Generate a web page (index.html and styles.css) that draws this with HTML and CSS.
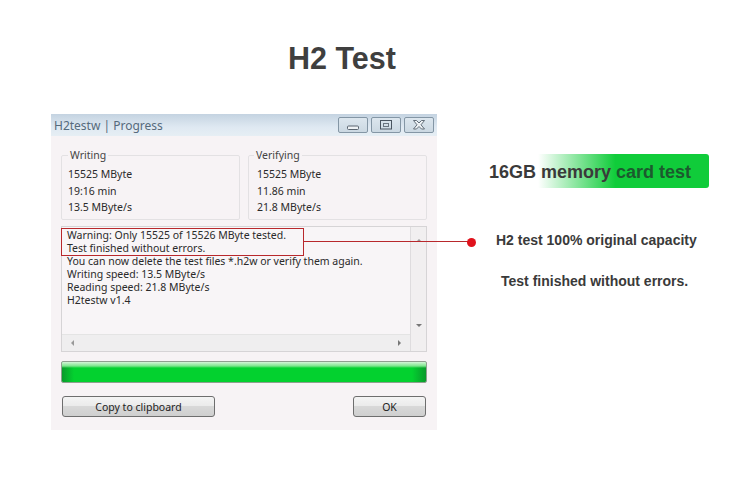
FILE: index.html
```html
<!DOCTYPE html>
<html lang="en">
<head>
    <meta charset="UTF-8">
    <meta name="viewport" content="width=device-width, initial-scale=1.0">
    <title>H2 Test</title>
    <link rel="stylesheet" href="styles.css">
</head>
<body>
    <h1 class="page-title">H2 Test</h1>
    <div class="stage">
        <div class="window">
            <div class="titlebar">
                <span class="titlebar-text">H2testw | Progress</span>
                <div class="win-buttons">
                    <span class="win-btn">
                        <svg width="14" height="10" viewBox="0 0 14 10"><rect x="1.500" y="6" width="11" height="3.500" rx="1" fill="#eef2f5" stroke="#5a6570"/></svg>
                    </span>
                    <span class="win-btn">
                        <svg width="14" height="10" viewBox="0 0 14 10"><rect x="1.500" y="0.500" width="11" height="8.500" fill="none" stroke="#4a5560"/><rect x="4.500" y="3.500" width="5" height="3" fill="none" stroke="#6a7580"/></svg>
                    </span>
                    <span class="win-btn">
                        <svg width="14" height="10" viewBox="0 0 14 10"><path d="M1.500 0.500h3L7 3l2.500-2.500h3L9 4.800l3.500 4.200h-3L7 6.500 4.500 9h-3L5 4.800z" fill="#eef2f5" stroke="#56616c" stroke-width="0.900"/></svg>
                    </span>
                </div>
            </div>
            <div class="window-body">
                <div class="groups">
                    <fieldset class="group group-write">
                        <legend>Writing</legend>
                        <p>15525 MByte</p>
                        <p>19:16 min</p>
                        <p>13.5 MByte/s</p>
                    </fieldset>
                    <fieldset class="group group-verify">
                        <legend>Verifying</legend>
                        <p>15525 MByte</p>
                        <p>11.86 min</p>
                        <p>21.8 MByte/s</p>
                    </fieldset>
                </div>
                <div class="log">
                    <div class="log-main">
                        <div class="log-text">
                            <p>Warning: Only 15525 of 15526 MByte tested.</p>
                            <p>Test finished without errors.</p>
                            <p>You can now delete the test files *.h2w or verify them again.</p>
                            <p>Writing speed: 13.5 MByte/s</p>
                            <p>Reading speed: 21.8 MByte/s</p>
                            <p>H2testw v1.4</p>
                        </div>
                        <div class="hscroll">
                            <span class="arrow-left"></span>
                            <span class="arrow-right"></span>
                        </div>
                    </div>
                    <div class="vscroll">
                        <span class="arrow-up"></span>
                        <span class="arrow-down"></span>
                    </div>
                    <div class="callout-box"></div>
                    <div class="callout-line"></div>
                    <div class="callout-dot"></div>
                </div>
                <div class="progress"><div class="progress-fill"></div></div>
                <div class="actions">
                    <button class="btn btn-copy">Copy to clipboard</button>
                    <button class="btn btn-ok">OK</button>
                </div>
            </div>
        </div>
        <div class="notes">
            <div class="badge">16GB memory <span class="badge-dark">card test</span></div>
            <p class="note note-first">H2 test 100% original capacity</p>
            <p class="note note-second">Test finished without errors.</p>
        </div>
    </div>
</body>
</html>
```

FILE: styles.css
```css
body {
    font-family: "Liberation Sans", Arial, sans-serif;
    background-color: #fff;
    margin: 0;
    padding: 0;
    overflow: hidden;
}

p {
    margin: 0;
}

.page-title {
    margin: 0;
    height: 114px;
    padding-top: 41px;
    box-sizing: border-box;
    padding-right: 63px;
    text-align: center;
    font-size: 30.5px;
    line-height: 34px;
    font-weight: bold;
    color: #3f3f3f;
}

.stage {
    display: flex;
    padding-left: 51px;
}

/* dialog */
.window {
    width: 386px;
    height: 316px;
    background-color: #f7f3f5;
    flex-shrink: 0;
    font-family: "Noto Sans", sans-serif;
    font-size: 10.5px;
    color: #2a2a2a;
}

.titlebar {
    height: 22px;
    padding: 0 3px 0 3px;
    display: flex;
    justify-content: space-between;
    background: linear-gradient(to bottom, #c4d3e1, #dfe9f2 60%, #e6eef4);
}

.titlebar-text {
    font-size: 12px;
    line-height: 23px;
    color: #566a7c;
}

.win-buttons {
    display: flex;
    gap: 3px;
    padding-top: 3px;
}

.win-btn {
    width: 28px;
    height: 14px;
    border: 1px solid #8496a5;
    border-radius: 2px;
    background: linear-gradient(to bottom, #dce6ee, #cbd8e2);
    display: flex;
    align-items: center;
    justify-content: center;
}

.window-body {
    padding: 13px 10px 0;
}

.groups {
    display: flex;
    gap: 8px;
}

.group {
    height: 71px;
    box-sizing: border-box;
    margin: 0;
    min-width: 0;
    padding: 4px 6px 0 6px;
    border: 1px solid #e3e1e3;
    border-radius: 2px;
    line-height: 16.5px;
}

.group legend {
    padding: 0 2px;
    color: #444;
    line-height: 13px;
}

.group-write {
    width: 179px;
}

.group-verify {
    width: 179px;
    padding-left: 8px;
}

.group-verify legend {
    margin-left: -3px;
}

.log {
    position: relative;
    margin-top: 6px;
    height: 126px;
    box-sizing: border-box;
    border: 1px solid #d6d4d6;
    display: flex;
}

.log-main {
    flex: 1;
    display: flex;
    flex-direction: column;
}

.log-text {
    flex: 1;
    padding: 2px 5px;
    line-height: 12.9px;
    background-color: #f8f5f7;
}

.hscroll {
    height: 16px;
    background-color: #efeeef;
    border-top: 1px solid #e4e4e4;
    display: flex;
    align-items: center;
    justify-content: space-between;
    padding: 0 9px;
}

.vscroll {
    width: 15px;
    background-color: #f1eff0;
    border-left: 1px solid #dedcde;
    display: flex;
    flex-direction: column;
    justify-content: space-between;
    align-items: center;
    padding: 12px 0 24px;
}

.arrow-up {
    border: 3px solid transparent;
    border-top: 0;
    border-bottom-color: #999;
}

.arrow-down {
    border: 3px solid transparent;
    border-bottom: 0;
    border-top-color: #777;
}

.arrow-left {
    border: 3px solid transparent;
    border-left: 0;
    border-right-color: #999;
}

.arrow-right {
    border: 3px solid transparent;
    border-right: 0;
    border-left-color: #777;
}

/* red annotation over the log */
.callout-box {
    position: absolute;
    left: -1px;
    top: 1px;
    width: 241px;
    height: 26px;
    border: 1px solid #b8282c;
}

.callout-line {
    position: absolute;
    left: 241px;
    top: 14px;
    width: 168px;
    height: 1px;
    background-color: #b8282c;
}

.callout-dot {
    position: absolute;
    left: 405px;
    top: 11px;
    width: 9px;
    height: 9px;
    border-radius: 50%;
    background-color: #e0121c;
}

.progress {
    margin-top: 9px;
    height: 22px;
    box-sizing: border-box;
    border: 1px solid #8f9f8f;
    border-radius: 2px;
    overflow: hidden;
    background-color: #03d12f;
}

.progress-fill {
    height: 100%;
    background:
        linear-gradient(to bottom, #d4f5d8 0, #7ce68c 4px, transparent 6px),
        linear-gradient(to right, #0a9a2c 0, #03d12f 12px, #03d12f calc(100% - 14px), #0a9a2c 100%);
}

.actions {
    margin-top: 13px;
    padding: 0 1px;
    display: flex;
    justify-content: space-between;
}

.btn {
    height: 21px;
    padding: 0;
    font-family: "Noto Sans", sans-serif;
    font-size: 10.5px;
    color: #222;
    border: 1px solid #6e6e6e;
    border-radius: 3px;
    background: linear-gradient(to bottom, #f4f4f4, #ebebeb 45%, #d8d8d8 50%, #cfcfcf);
}

.btn-copy {
    width: 153px;
}

.btn-ok {
    width: 73px;
}

/* right column */
.notes {
    margin-left: 38px;
    width: 236px;
    position: relative;
    font-weight: bold;
    color: #3a3a3a;
}

.badge {
    margin-top: 40px;
    height: 34px;
    width: 234px;
    padding-left: 14px;
    box-sizing: border-box;
    border-radius: 3px;
    font-size: 18px;
    line-height: 36px;
    background: linear-gradient(to right, #fff 0, #fff 27%, #10cc3a 60%, #10cc3a 100%);
    white-space: nowrap;
}

.badge-dark {
    color: #1c5a2e;
}

.note {
    font-size: 14px;
    line-height: 16px;
    white-space: nowrap;
}

.note-first {
    margin-top: 44px;
    padding-left: 21px;
}

.note-second {
    margin-top: 25px;
    padding-left: 26px;
}
```
